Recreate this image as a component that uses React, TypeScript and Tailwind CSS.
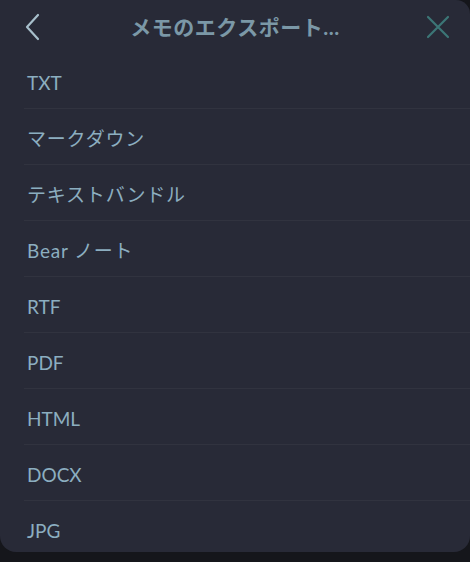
import React from "react";

const formats = [
    { label: "TXT", jp: false },
    { label: "マークダウン", jp: true },
    { label: "テキストバンドル", jp: true },
    { label: "Bear ノート", jp: true },
    { label: "RTF", jp: false },
    { label: "PDF", jp: false },
    { label: "HTML", jp: false },
    { label: "DOCX", jp: false },
    { label: "JPG", jp: false },
];

const App: React.FunctionComponent = () => {
    return (
        <div
            className="w-[470px] h-[562px] bg-[#15161b] flex flex-col overflow-hidden"
            style={{ fontFamily: '"Lato", "Noto Sans CJK JP", sans-serif' }}
        >
            <div className="h-[552px] bg-[#282a37] rounded-b-[16px] rounded-tr-[14px] overflow-hidden flex flex-col">
                <div className="h-[53px] shrink-0 flex items-center justify-between px-5">
                    <button className="w-8 h-8 flex items-center justify-center -ml-1">
                        <svg width="18" height="28" viewBox="0 0 18 28" fill="none">
                            <path d="M15 2 L4 14 L15 26" stroke="#a7bfcb" strokeWidth="2.2" strokeLinecap="round" strokeLinejoin="round" />
                        </svg>
                    </button>
                    <h1 className="text-[21px] font-bold text-[#7b98a7] tracking-[0.5px]">メモのエクスポート...</h1>
                    <button className="w-8 h-8 flex items-center justify-center mr-[-4px]">
                        <svg width="24" height="24" viewBox="0 0 24 24" fill="none">
                            <path d="M2 2 L22 22 M22 2 L2 22" stroke="#3c7676" strokeWidth="2.2" strokeLinecap="round" />
                        </svg>
                    </button>
                </div>
                <ul className="flex flex-col">
                    {formats.map((item) => (
                        <li key={item.label} className="h-[56px] shrink-0 flex flex-col">
                            <div
                                className={
                                    item.jp
                                        ? "flex-1 flex items-center pl-[27px] pt-[5px] text-[19px] text-[#8caec0] tracking-[0.8px]"
                                        : "flex-1 flex items-center pl-[27px] pt-[5px] text-[19px] text-[#8caec0]"
                                }
                            >
                                {item.label}
                            </div>
                            <div className="ml-6 h-px bg-[#31333f]" />
                        </li>
                    ))}
                </ul>
            </div>
        </div>
    );
};

export default App;
